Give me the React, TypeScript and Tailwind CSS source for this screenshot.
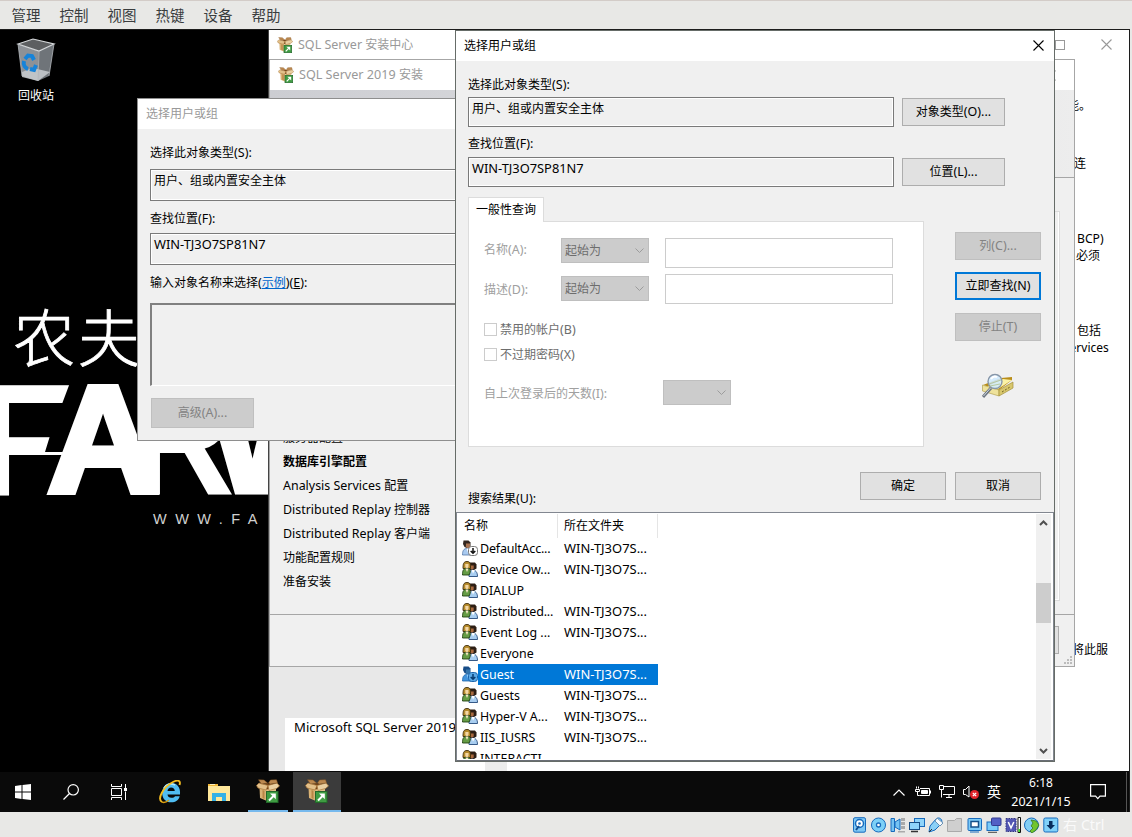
import React from 'react';

const FONT = "font-['Noto_Sans','Noto_Sans_CJK_SC',sans-serif]";

/* Chinese stays at the inherited size, Latin runs are set slightly larger. */
function T({ children, latin = 'text-[12.5px]', className = '' }: { children: string; latin?: string; className?: string }) {
  const parts = children.match(/[\x20-\x7e]+|[^\x20-\x7e]+/g) ?? [];
  return (
    <span className={`block whitespace-pre text-[12px] leading-[16px] ${className}`}>
      {parts.map((p, i) => (/^[\x20-\x7e]/.test(p) ? <span key={i} className={latin}>{p}</span> : <React.Fragment key={i}>{p}</React.Fragment>))}
    </span>
  );
}

function BoxIcon({ className = '' }: { className?: string }) {
  return (
    <svg viewBox="0 0 24 24" className={`shrink-0 ${className}`}>
      <path d="M3.500 8 11 10v12l-7-3z" fill="#d9b274" />
      <path d="M11 10 20 7v12l-9 4z" fill="#e0c08a" />
      <path d="M3 7 11 4l10 3-10 3.500z" fill="#6d3f17" />
      <path d="M.5 6.500 3 4l9 2.500-2 4.500-8-2z" fill="#e2c08a" stroke="#a9763a" strokeWidth=".7" />
      <path d="m12 6.500 9-2.500 2.500 3-3 2.500-7.500 2z" fill="#ead0a2" stroke="#a9763a" strokeWidth=".7" />
      <path d="M2.500.8 8 1l3.500 3-6 1zM14.500 1l6-.2 1 3-7 1.200-2-1z" fill="#bc8950" stroke="#8b5a27" strokeWidth=".5" />
      <path d="m6.500 11 2 .7V20l-2-1z" fill="#b98546" />
      <rect x="10.500" y="12.500" width="11.500" height="11" fill="#3f9c42" stroke="#23692a" />
      <path d="m13 21.500 4.500-4.500" stroke="#fff" strokeWidth="1.900" />
      <path d="M14 14.500h5.800v5.800z" fill="#fff" />
    </svg>
  );
}

function GroupIcon() {
  return (
    <svg viewBox="0 0 16 16" className="h-4 w-4 shrink-0">
      <path d="M7 1.500h6l1.500 2v4L12 9H8z" fill="#2d1e14" />
      <path d="M8.500 4.500h3.200v3l-1.500 1.500-1.700-1z" fill="#a8693f" />
      <path d="M7 15.500c0-4 1-6.500 3.500-6.500 3 0 5 2 5 6.500z" fill="#a8cdf0" stroke="#24497b" strokeWidth=".9" />
      <path d="m9.500 9 1.500 3.500L13 9z" fill="#fff" />
      <path d="M1 7.500c0-4.500.5-7 4-7s3.500 2.500 3.500 7z" fill="#b88d2d" stroke="#3f2c0b" strokeWidth=".9" />
      <path d="M3.300 3h3.200v3L5 7.500 3.300 6z" fill="#f4d7a5" />
      <path d="M.5 14c0-4 .5-6.500 4.200-6.500S8.500 9 8 12l-1 2z" fill="#659c45" stroke="#234313" strokeWidth=".9" />
      <path d="m3.500 7.500 1.500 3.500 1.500-3.500z" fill="#f7e6c6" />
    </svg>
  );
}

function UserIcon({ selected }: { selected?: boolean }) {
  return (
    <svg viewBox="0 0 16 16" className="h-4 w-4 shrink-0">
      <path d="M1.500.500h5l2 2v4L6 8.500 2.500 7 1 4z" fill={selected ? '#174c86' : '#33271f'} />
      <path d="M4 3.500h4V7L6 8.500 3.800 7z" fill={selected ? '#3576ad' : '#a87350'} />
      <path d="M.5 15c0-4 1-6.500 4.500-6.500S10 11 10 15z" fill={selected ? '#4294dc' : '#a9caf0'} stroke={selected ? '#1c64ab' : '#5578a8'} strokeWidth=".8" />
      <path d="m4.500 8.500 1.500 4 1.500-4z" fill={selected ? '#8dc8f5' : '#fff'} />
      <rect x="6.500" y="6.500" width="9" height="9" rx="3" fill={selected ? '#5ba9e6' : '#fff'} stroke={selected ? '#1c64ab' : '#777'} />
      <path d="M11 8v5M8.700 11l2.300 2.300 2.300-2.300" stroke={selected ? '#073b70' : '#111'} strokeWidth="1.500" fill="none" />
    </svg>
  );
}

function Btn({ children, kind = 'normal', className = '' }: { children: string; kind?: 'normal' | 'disabled' | 'focus'; className?: string }) {
  const k =
    kind === 'disabled'
      ? 'border border-[#bfbfbf] bg-[#cccccc] text-[#838383]'
      : kind === 'focus'
        ? 'border-2 border-[#0078d7] bg-[#e1e1e1] text-black'
        : 'border border-[#adadad] bg-[#e1e1e1] text-black';
  return (
    <div className={`flex h-7 shrink-0 items-center justify-center ${k} ${className}`}>
      <T>{children}</T>
    </div>
  );
}

function Field({ children, className = '' }: { children: string; className?: string }) {
  const latin = /^[A-Z]/.test(children);
  return (
    <div className={`shrink-0 border border-[#7a7a7a] bg-[#f0f0f0] ${className}`}>
      <div className={`h-full border border-white pl-[2px] ${latin ? 'pt-[1px]' : 'pt-[2px]'}`}>
        <T latin="text-[12.85px]">{children}</T>
      </div>
    </div>
  );
}

function Select({ children = '', className = '' }: { children?: string; className?: string }) {
  return (
    <div className={`flex h-[25px] shrink-0 items-center justify-between border border-[#bfbfbf] bg-[#cccccc] pl-[3px] pr-1 text-[#6d6d6d] ${className}`}>
      <T>{children}</T>
      <svg viewBox="0 0 9 6" className="h-[6px] w-[9px]"><path d="m.5.5 4 4 4-4" fill="none" stroke="#9c9c9c" /></svg>
    </div>
  );
}

function CloseX({ color, className = '' }: { color: string; className?: string }) {
  return (
    <svg viewBox="0 0 11 11" className={`h-[11px] w-[11px] ${className}`}>
      <path d="m.5.5 10 10m0-10-10 10" stroke={color} strokeWidth="1.100" />
    </svg>
  );
}

function Wallpaper() {
  return (
    <svg viewBox="0 30 269 742" className="absolute left-0 top-0 h-[742px] w-[269px] bg-black">
      <text x="13" y="362" fontSize="62" letterSpacing="3" fill="#fff" fontFamily="Noto Sans CJK SC" fontWeight="300" stroke="#fff" strokeWidth=".8">农夫</text>
      <g fill="#fff" fontFamily="Liberation Sans" fontWeight="700" fontSize="160">
        <text x="-30" y="495" textLength="113" lengthAdjust="spacingAndGlyphs">F</text>
        <path d="M71 380 62 404h24v-24zM53 426l-8 26h34v-26z" fill="#000" />
        <text x="47" y="492" fontSize="152" textLength="112" lengthAdjust="spacingAndGlyphs" stroke="#fff" strokeWidth="6">A</text>
        <text x="129" y="495" textLength="106" lengthAdjust="spacingAndGlyphs">R</text>
        <text x="207" y="492" fontSize="154" textLength="160" lengthAdjust="spacingAndGlyphs" stroke="#fff" strokeWidth="5">W</text>
      </g>
      <text x="153" y="524" fontSize="14.500" letterSpacing="8.500" fill="#d0d0d0" fontFamily="Liberation Sans">WWW.FA</text>
    </svg>
  );
}

function RecycleBin() {
  return (
    <div className="absolute left-[10px] top-[8px] flex w-[52px] flex-col items-center">
      <svg viewBox="0 0 40 44" className="h-11 w-10">
        <path d="m2 6 21 7-1 30-16-5z" fill="#8d9196" />
        <path d="m23 13 15-7-5 32-11 5z" fill="#6f7479" />
        <path d="M2 6 17 1l21 5-15 7z" fill="#5d5f61" stroke="#d5d8da" strokeWidth="1.200" />
        <path d="m6 34 11-4 17 4-12 9-16-4z" fill="#c9cdd0" opacity=".85" />
        <path d="m2 6 4 32M38 6l-5 32M23 13l-1 30" stroke="#b4b8bc" strokeWidth=".8" />
        <g fill="none" stroke="#1683d9" strokeWidth="4">
          <path d="m9 21 3-3.500 4 .5 2 4" /><path d="M8 23c-1 4 1 7 4 8" /><path d="m14 31 4 1 2-5" />
        </g>
      </svg>
      <T className="mt-[6px] text-white">回收站</T>
    </div>
  );
}

function InstallCenter() {
  return (
    <div className="absolute left-[268px] top-0 flex h-[741px] w-[861px] flex-col overflow-hidden border-l border-[#444] bg-white">
      <div className="flex h-[29px] shrink-0 items-center pl-2">
        <BoxIcon className="h-4 w-4" />
        <T className="ml-[5px] mt-[1px] text-[#999]">SQL Server 安装中心</T>
        <svg viewBox="0 0 10 10" className="ml-auto mr-[36px] h-[10px] w-[10px]"><rect x=".5" y=".5" width="9" height="9" fill="none" stroke="#999" /></svg>
        <CloseX color="#999" className="mr-[17px]" />
      </div>
      <div className="flex h-[712px]">
        <div className="flex w-[216px] shrink-0 flex-col bg-[#e8e8e8] pl-4">
          <div className="mt-[659px] h-[53px] bg-white pl-[9px] pt-[1px]">
            <T latin="text-[13.1px]">Microsoft SQL Server 2019</T>
          </div>
        </div>
        <div className="w-[22px] bg-[#ececec]" />
        <div className="ml-[291px] flex w-[331px] flex-col pl-[269px]">
          <T className="mt-[39px]">能。</T>
          <T className="ml-[7px] mt-[42px]">连</T>
          <T className="ml-[10px] mt-[59px]" latin="text-[12.2px]">BCP)</T>
          <T className="ml-[9px] mt-[1px]">必须</T>
          <T className="ml-[10px] mt-[59px]">包括</T>
          <T className="-ml-[4px] mt-[1px]" latin="text-[12px]">Services</T>
          <T className="ml-[5px] mt-[286px]">将此服</T>
        </div>
      </div>
    </div>
  );
}

const steps = ['Analysis Services 配置', 'Distributed Replay 控制器', 'Distributed Replay 客户端', '功能配置规则', '准备安装'];

function Setup() {
  return (
    <div className="absolute left-[269px] top-[29px] flex h-[608px] w-[806px] flex-col border border-[#a6a6a6] bg-[#f0f0f0]">
      <div className="flex h-[30px] shrink-0 items-center bg-white pl-2">
        <BoxIcon className="h-4 w-4" />
        <T className="ml-[5px] text-[#999]" latin="text-[12.6px]">SQL Server 2019 安装</T>
        <CloseX color="#999" className="ml-auto mr-[18px]" />
      </div>
      <div className="h-[88px] shrink-0 border-b border-[#a6a6a6] bg-gradient-to-r from-[#cccdd2] to-[#ededed]" />
      <div className="flex h-[436px] shrink-0">
        <div className="flex w-[188px] flex-col gap-2 pl-[13px] pt-[252px]">
          <T>服务器配置</T>
          <T className="font-bold">数据库引擎配置</T>
          {steps.map((s) => <T key={s} latin="text-[12.45px]">{s}</T>)}
        </div>
        <div className="mb-[13px] ml-auto mr-[14px] mt-[33px] w-[400px] border border-[#dcdcdc] shadow-[inset_-1px_-1px_0_#fff]" />
      </div>
      <div className="flex flex-1 items-start border-t border-[#a6a6a6] pt-[11px]">
        <div className="ml-auto h-7 w-20 border border-[#adadad] bg-[#e1e1e1]" />
        <svg viewBox="0 0 9 9" className="ml-[5px] mr-[1px] mt-[30px] h-[9px] w-[9px] fill-[#bcbcbc]">
          <path d="M6 0h2v2H6zM3 3h2v2H3zM6 3h2v2H6zM0 6h2v2H0zM3 6h2v2H3zM6 6h2v2H6z" />
        </svg>
      </div>
    </div>
  );
}

function BackDialog() {
  return (
    <div className="absolute left-[137px] top-[68px] flex h-[343px] w-[460px] flex-col border border-[#8e8e8e] bg-[#f0f0f0]">
      <div className="flex h-[30px] shrink-0 items-center bg-white pl-2 text-[#999]"><T>选择用户或组</T></div>
      <div className="flex flex-col pl-3">
        <T className="mt-4">选择此对象类型(S):</T>
        <Field className="mt-2 h-8 w-[430px]">用户、组或内置安全主体</Field>
        <T className="mt-[10px]">查找位置(F):</T>
        <Field className="mt-[6px] h-8 w-[430px]">WIN-TJ3O7SP81N7</Field>
        <div className="mt-[10px] flex">
          <T>输入对象名称来选择(</T>
          <T className="text-[#0066cc] underline">示例</T>
          <T>)(</T><T className="underline">E</T><T>):</T>
        </div>
        <div className="mt-3 h-[83px] w-[430px] border-b border-l-2 border-t-2 border-b-white border-l-[#808080] border-t-[#808080]" />
        <Btn kind="disabled" className="ml-[1px] mt-3 h-[30px] w-[103px]">高级(A)...</Btn>
      </div>
    </div>
  );
}

function SearchIcon() {
  return (
    <svg viewBox="0 0 32 26" className="h-[26px] w-8">
      <path d="m1 12 18-7 11-1v3L17 17z" fill="#b98d18" />
      <path d="m4 14 17-8 9 1-14 9z" fill="#fbf3a6" />
      <path d="m.5 12 16.500 5v6L.5 18z" fill="#eee29b" stroke="#b4a453" strokeWidth=".7" />
      <path d="m17 17 14-8v6l-14 8z" fill="#d8c76c" stroke="#a4913e" strokeWidth=".7" />
      <path d="m20 19 8-5" stroke="#6e6125" strokeDasharray="2 1.500" />
      <path d="m1 24 8-9" stroke="#6c7580" strokeWidth="3" />
      <path d="m1.500 23 7-8" stroke="#cdd5dd" />
      <circle cx="13" cy="8.500" r="7" fill="#cfeaff" fillOpacity=".85" stroke="#8796a8" strokeWidth="1.400" />
      <path d="m7 11 12-4M8 13l10-2" stroke="#b5c7a1" />
      <path d="M9 6c2-3 4-3 6-2" stroke="#fff" strokeWidth="2" fill="none" />
    </svg>
  );
}

const W = 'WIN-TJ3O7S...';
const rows: [string, string][] = [
  ['DefaultAcc...', W], ['Device Ow...', W], ['DIALUP', ''], ['Distributed...', W], ['Event Log ...', W], ['Everyone', ''],
  ['Guest', W], ['Guests', W], ['Hyper-V A...', W], ['IIS_IUSRS', W], ['INTERACTI...', ''],
];

function Results() {
  return (
    <div className="flex h-[249px] w-[598px] shrink-0 justify-between overflow-hidden border border-[#828790] border-b-[#6a6e76] bg-white pb-[1px] pt-[1px]">
      <div className="flex w-[201px] flex-col overflow-hidden">
        <div className="flex h-6 shrink-0">
          <T className="flex h-6 w-[101px] items-center border-r border-[#e5e5e5] pl-[7px]">名称</T>
          <T className="flex h-6 w-[100px] items-center border-r border-[#e5e5e5] pl-[6px]">所在文件夹</T>
        </div>
        {rows.map(([name, folder]) => {
          const sel = name === 'Guest';
          const long = name === 'DefaultAcc...' || name === 'Distributed...';
          return (
            <div key={name} className="flex h-[21px] shrink-0 items-center pl-[5px]">
              <div className="mt-[-2px] flex">{name === 'DefaultAcc...' || sel ? <UserIcon selected={sel} /> : <GroupIcon />}</div>
              <div className={`flex h-[21px] w-[180px] items-center pl-[2px] ${sel ? 'bg-[#0078d7] text-white' : ''}`}>
                <T latin={long ? 'text-[12.5px] tracking-[-0.2px]' : 'text-[12.4px]'} className="w-[84px]">{name}</T>
                <T latin="text-[12.95px]">{folder}</T>
              </div>
            </div>
          );
        })}
      </div>
      <div className="mr-[2px] flex w-[15px] flex-col items-center bg-[#f0f0f0]">
        <svg viewBox="0 0 9 6" className="mt-[6px] h-[6px] w-[9px]"><path d="m1 5 3.500-3.500L8 5" fill="none" stroke="#505050" strokeWidth="2" /></svg>
        <div className="mt-[57px] h-10 w-full bg-[#cdcdcd]" />
        <svg viewBox="0 0 9 6" className="mb-[5px] mt-auto h-[6px] w-[9px]"><path d="m1 1 3.500 3.500L8 1" fill="none" stroke="#505050" strokeWidth="2" /></svg>
      </div>
    </div>
  );
}

function FrontDialog() {
  return (
    <div className="absolute left-[455px] top-0 flex h-[732px] w-[600px] flex-col border border-[#666c68] bg-[#f0f0f0]">
      <div className="flex h-[30px] shrink-0 items-center justify-between bg-white pl-2 pr-[10px]">
        <T>选择用户或组</T>
        <CloseX color="#000" className="mb-[2px]" />
      </div>
      <div className="flex flex-col pl-3">
        <T className="mt-4">选择此对象类型(S):</T>
        <div className="mt-1 flex items-center gap-2">
          <Field className="h-[30px] w-[426px]">用户、组或内置安全主体</Field>
          <Btn className="w-[103px]">对象类型(O)...</Btn>
        </div>
        <T className="mt-[9px]">查找位置(F):</T>
        <div className="mt-[5px] flex items-center gap-2">
          <Field className="h-[30px] w-[426px]">WIN-TJ3O7SP81N7</Field>
          <Btn className="w-[103px]">位置(L)...</Btn>
        </div>
        <div className="mt-[10px] flex">
          <div className="flex w-[456px] flex-col">
            <div className="z-10 -mb-px flex h-[25px] w-[76px] items-center justify-center border border-b-0 border-[#dcdcdc] bg-white"><T>一般性查询</T></div>
            <div className="flex h-[226px] flex-col border border-[#dcdcdc] bg-white pl-[15px] pt-4">
              <div className="flex h-[30px]">
                <T className="mt-1 w-[77px] text-[#a0a0a0]">名称(A):</T>
                <Select className="w-[88px]">起始为</Select>
                <div className="ml-4 h-[30px] w-[228px] border border-[#ccc]" />
              </div>
              <div className="mt-[6px] flex h-[30px]">
                <T className="mt-2 w-[77px] text-[#a0a0a0]">描述(D):</T>
                <Select className="mt-[2px] w-[88px]">起始为</Select>
                <div className="ml-4 h-[30px] w-[228px] border border-[#ccc]" />
              </div>
              <div className="mt-[18px] flex gap-[3px] text-[#6d6d6d]"><div className="mt-[1px] h-[13px] w-[13px] border border-[#ccc]" /><T>禁用的帐户(B)</T></div>
              <div className="mt-[9px] flex gap-[3px] text-[#6d6d6d]"><div className="mt-[1px] h-[13px] w-[13px] border border-[#ccc]" /><T>不过期密码(X)</T></div>
              <div className="mt-[17px] flex">
                <T className="mt-[6px] w-[179px] text-[#a0a0a0]">自上次登录后的天数(I):</T>
                <Select className="w-[68px]" />
              </div>
            </div>
          </div>
          <div className="ml-[31px] flex w-[86px] flex-col items-center pt-[35px]">
            <Btn kind="disabled" className="w-full">列(C)...</Btn>
            <Btn kind="focus" className="mt-3 w-full">立即查找(N)</Btn>
            <Btn kind="disabled" className="mt-[13px] w-full">停止(T)</Btn>
            <div className="mt-[32px]"><SearchIcon /></div>
          </div>
        </div>
        <div className="mt-[25px] flex">
          <T className="mt-[19px] w-[392px]">搜索结果(U):</T>
          <Btn className="w-[86px]">确定</Btn>
          <Btn className="ml-[9px] w-[86px]">取消</Btn>
        </div>
      </div>
      <div className="mt-auto flex"><Results /></div>
    </div>
  );
}

function Taskbar() {
  return (
    <div className="flex h-10 shrink-0 items-center bg-[#0a0a0a] text-white">
      <svg viewBox="0 0 16 16" className="ml-[15px] h-4 w-4 fill-white"><path d="m0 2 6.500-1v6.500H0zM7.500 1 16 0v7.500H7.500zM0 8.500h6.500V15L0 14zM7.500 8.500H16V16l-8.500-1z" /></svg>
      <svg viewBox="0 0 16 16" className="ml-8 h-4 w-4" fill="none" stroke="#fff" strokeWidth="1.200"><circle cx="10.200" cy="5.800" r="5.200" /><path d="M6.500 9.500.5 15.500" /></svg>
      <svg viewBox="0 0 16 16" className="ml-8 h-4 w-4" fill="none" stroke="#fff"><path d="M.5 0v2.500h10V0M.5 16v-2.500h10V16M.5 4.500h10v7H.5zM14.500 0v4M14.500 7.500V16" /><path d="M13 4h3v3h-3z" fill="#fff" stroke="none" /></svg>
      <svg viewBox="0 0 24 24" className="ml-[31px] h-6 w-6">
        <path d="M22 14.500H9.500c.3 2.300 1.600 3.300 4 3.300 1.700 0 2.800-.5 3.500-1.500h4.700c-1.200 4-4 6-8.500 6-5.600 0-9-3.700-9-9.300s3.500-10 9-10c6 0 9.500 4.500 8.800 11.500zM9.500 11h7.300c-.2-2.300-1.400-3.500-3.700-3.500-2.100 0-3.300 1.200-3.600 3.500z" fill="#50bdf2" />
        <path d="M6 8c2-4 7-5 11-3" stroke="#b8ebff" fill="none" strokeWidth="1.500" />
        <path d="M4 22c-5-3 1-15 11-20 5-2.500 8-1.500 6.500 3" fill="none" stroke="#f5bd20" strokeWidth="1.900" />
        <path d="M4 22c2 1 4.500 0 7-2" fill="none" stroke="#d89b0e" strokeWidth="1.500" />
      </svg>
      <svg viewBox="0 0 22 19" className="ml-[26px] h-[19px] w-[22px]"><path d="M0 1h10v3H0z" fill="#f0b83a" /><path d="M0 3h22v15H0z" fill="#ffe79a" /><path d="M2 1h5v1H2z" fill="#fff1bd" /><path d="M4 18v-8h14v8h-4v-4H8v4z" fill="#35b1e6" /></svg>
      <div className="ml-[18px] flex h-10 w-10 items-center justify-center border-b-2 border-[#76b9ed]"><BoxIcon className="h-6 w-6" /></div>
      <div className="ml-[5px] flex h-10 w-12 items-center justify-center border-b-2 border-[#76b9ed] bg-[#3b3b3b]"><BoxIcon className="h-6 w-6" /></div>
      <div className="ml-auto flex h-10 items-center">
        <svg viewBox="0 0 12 7" className="h-[7px] w-3" fill="none" stroke="#fff" strokeWidth="1.200"><path d="m.5 6.500 5.500-5.500 5.500 5.500" /></svg>
        <svg viewBox="0 0 16 12" className="ml-[10px] h-3 w-4" fill="none" stroke="#fff"><path d="M5 2.500h9.500v7H4.500M15.500 4.500v3M1.500.500v2M3.500.500v2M.5 3.500h4v2h-4zM2.500 6v3.500h2" /><path d="M6.500 4.500h6v3h-6z" fill="#fff" /></svg>
        <svg viewBox="0 0 16 14" className="ml-2 h-[14px] w-4" fill="none" stroke="#fff"><path d="M5 1.500h10.500v8H4M10 9.500v3M7 12.500h6M.5.5h4v4h-4zM2.500 4.500v8" /></svg>
        <svg viewBox="0 0 16 14" className="ml-2 h-[14px] w-4"><path d="M.5 4.500h2L6 1v11L2.500 9.500h-2z" fill="none" stroke="#fff" /><circle cx="11.500" cy="9.500" r="4.500" fill="#e0242c" /><path d="m9.800 7.800 3.400 3.400m0-3.400-3.400 3.400" stroke="#fff" strokeWidth="1.200" /></svg>
        <span className="ml-[8px] text-[14px] leading-[16px]">英</span>
        <div className="ml-[9px] flex w-[62px] flex-col items-center gap-[3px]">
          <span className="text-[12px] leading-[16px]">6:18</span>
          <span className="whitespace-nowrap text-[12.5px] leading-[16px]">2021/1/15</span>
        </div>
        <svg viewBox="0 0 16 16" className="ml-[18px] h-4 w-4" fill="none" stroke="#fff" strokeWidth="1.200"><path d="M.6.600h14.800v11.500H10l-2.200 2.500-2.200-2.500h-5z" /></svg>
        <div className="ml-[20px] mr-[2px] h-10 w-px bg-[#555]" />
      </div>
    </div>
  );
}

const B = '#176bbd';
const hostIcons: React.ReactNode[] = [
  <><rect x="1.500" y=".7" width="12" height="14.500" rx="1.500" fill="#7fc8f5" stroke={B} /><circle cx="7.500" cy="6.500" r="4" fill="#fff" stroke={B} strokeWidth="1.500" /><circle cx="7.500" cy="6.500" r="1.300" fill={B} /><path d="m4 13 3-4" stroke="#124e91" strokeWidth="2" /></>,
  <><circle cx="7.500" cy="8" r="7" fill="#7cd0f7" stroke={B} /><circle cx="7.500" cy="8" r="2" fill="#fff" stroke={B} strokeWidth="1.300" /></>,
  <><path d="M1 1.500h3.500v13H1zM5 5l5-3v11l-5-3z" fill="#75c3f3" stroke={B} /><path d="M11 1h4v3h-4zM11 5h4v3h-4zM11 9h4v3h-4zM8 14h7v1.500H8z" fill="#aaa" /></>,
  <><rect x="5.500" y="1.500" width="10" height="8" fill="#8fd4fa" stroke={B} /><rect x=".5" y="5.500" width="10" height="7" fill="#8fd4fa" stroke="#174d83" /><path d="M2 14.500h7" stroke="#333" strokeWidth="1.500" /></>,
  <><path d="m1 15 1-6 6-7c3-3 8 1 5 5l-6 6z" fill="#8bd0f7" stroke={B} /><path d="m9 1 6 5-3 3-5-5z" fill="#f7fbff" stroke="#6a91b4" /><path d="m1 15 3-3" stroke="#333" /></>,
  <><path d="M.5 14.500V3.500h7l2-2h5v13z" fill="#cfcfcf" stroke="#aaa" /></>,
  <><rect x="1" y="1.500" width="13.500" height="12" rx="1" fill="#7ccbf8" stroke={B} /><rect x="4" y="4.500" width="7.500" height="5.500" fill="#fff" stroke="#15518b" strokeWidth="1.500" /><path d="M3 15h9" stroke={B} /></>,
  <><rect x="1" y="5" width="11" height="8.500" fill="#7ccbf8" stroke={B} /><rect x="5.500" y="1" width="9.500" height="7.500" rx="1" fill="#5260c5" stroke="#343a91" /><path d="M2 15.300h9" stroke="#444" /></>,
  <><rect x="1" y="1.500" width="10" height="13" fill="#5356b3" stroke="#333783" strokeDasharray="1.500 1" /><path d="m3.300 5 2.700 6L8.800 5" stroke="#fff" strokeWidth="1.500" fill="none" /><path d="M13 .5h2.500v15H13z" fill="#fff" stroke="#111" /><path d="M13.500 12h1.500v3h-1.500z" fill="#3de321" /></>,
  <><circle cx="7.500" cy="8" r="7" fill="#82cef5" stroke={B} /><path d="m7 3 5 1 3 4-3 5-4 3-2-2 3-3-2-2 2-3z" fill="#72c52f" stroke="#367c21" strokeWidth=".8" /></>,
  <><rect x=".8" y="1" width="14" height="14" rx="1.500" fill="#80d1fa" stroke={B} /><path d="M6 4h3.500v4H12l-4.300 4.500L3.500 8H6z" fill="#082d5d" /></>,
];

export default function App() {
  return (
    <div className={`flex h-[837px] w-[1132px] flex-col overflow-hidden bg-[#e8e8e6] text-black ${FONT}`}>
      <div className="flex h-[29px] shrink-0 items-center gap-[19px] border-t border-[#d3ccc8] pl-[11.5px] text-[14.5px] leading-[20px] text-[#3a3d3e]">
        {['管理', '控制', '视图', '热键', '设备', '帮助'].map((m) => <span key={m}>{m}</span>)}
      </div>
      <div className="flex h-[783px] w-[1130px] shrink-0 flex-col border-r border-t border-[#1c1c1c] bg-[#0a0a0a]">
        <div className="relative h-[742px] shrink-0 overflow-hidden">
          <Wallpaper />
          <RecycleBin />
          <InstallCenter />
          <Setup />
          <BackDialog />
          <FrontDialog />
        </div>
        <Taskbar />
      </div>
      <div className="flex h-[25px] shrink-0 items-center pl-[852px]">
        {hostIcons.map((icon, i) => <svg key={i} viewBox="0 0 16 16" className="mr-[3.100px] h-4 w-4 shrink-0">{icon}</svg>)}
        <span className="ml-px whitespace-nowrap text-[14.2px] leading-[20px] text-[#fafafa]">右 Ctrl</span>
      </div>
    </div>
  );
}
